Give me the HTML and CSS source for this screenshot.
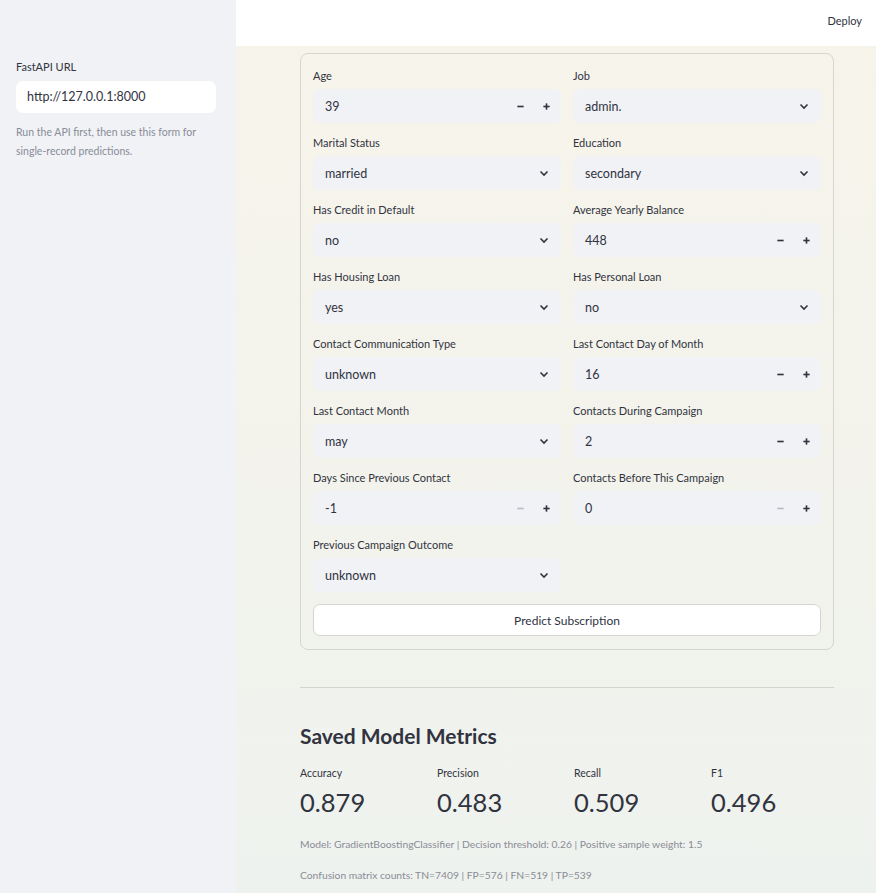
FILE: index.html
```html
<!DOCTYPE html>
<html lang="en">
<head>
  <meta charset="UTF-8">
  <meta name="viewport" content="width=device-width, initial-scale=1.0">
  <title>Bank Marketing Prediction</title>
  <link rel="stylesheet" href="styles.css">
</head>
<body>
  <aside class="sidebar">
    <label class="field-label">FastAPI URL</label>
    <div class="text-input">http://127.0.0.1:8000</div>
    <p class="sidebar-help">Run the API first, then use this form for single-record predictions.</p>
  </aside>

  <div class="main">
    <header class="topbar">
      <span class="deploy">Deploy</span>
    </header>

    <div class="content">
      <form class="form-card">
        <div class="form-grid">
          <div class="field">
            <label class="field-label">Age</label>
            <div class="box number">
              <span class="value">39</span>
              <span class="step"><svg viewBox="0 0 10 10"><line x1="1.5" y1="5" x2="8.5" y2="5"/></svg></span>
              <span class="step"><svg viewBox="0 0 10 10"><line x1="1.5" y1="5" x2="8.5" y2="5"/><line x1="5" y1="1.5" x2="5" y2="8.5"/></svg></span>
            </div>
          </div>
          <div class="field">
            <label class="field-label">Job</label>
            <div class="box select">
              <span class="value">admin.</span>
              <svg class="chevron" viewBox="0 0 12 12"><polyline points="2.5,4.5 6,8 9.5,4.5"/></svg>
            </div>
          </div>

          <div class="field">
            <label class="field-label">Marital Status</label>
            <div class="box select">
              <span class="value">married</span>
              <svg class="chevron" viewBox="0 0 12 12"><polyline points="2.5,4.5 6,8 9.5,4.5"/></svg>
            </div>
          </div>
          <div class="field">
            <label class="field-label">Education</label>
            <div class="box select">
              <span class="value">secondary</span>
              <svg class="chevron" viewBox="0 0 12 12"><polyline points="2.5,4.5 6,8 9.5,4.5"/></svg>
            </div>
          </div>

          <div class="field">
            <label class="field-label">Has Credit in Default</label>
            <div class="box select">
              <span class="value">no</span>
              <svg class="chevron" viewBox="0 0 12 12"><polyline points="2.5,4.5 6,8 9.5,4.5"/></svg>
            </div>
          </div>
          <div class="field">
            <label class="field-label">Average Yearly Balance</label>
            <div class="box number">
              <span class="value">448</span>
              <span class="step"><svg viewBox="0 0 10 10"><line x1="1.5" y1="5" x2="8.5" y2="5"/></svg></span>
              <span class="step"><svg viewBox="0 0 10 10"><line x1="1.5" y1="5" x2="8.5" y2="5"/><line x1="5" y1="1.5" x2="5" y2="8.5"/></svg></span>
            </div>
          </div>

          <div class="field">
            <label class="field-label">Has Housing Loan</label>
            <div class="box select">
              <span class="value">yes</span>
              <svg class="chevron" viewBox="0 0 12 12"><polyline points="2.5,4.5 6,8 9.5,4.5"/></svg>
            </div>
          </div>
          <div class="field">
            <label class="field-label">Has Personal Loan</label>
            <div class="box select">
              <span class="value">no</span>
              <svg class="chevron" viewBox="0 0 12 12"><polyline points="2.5,4.5 6,8 9.5,4.5"/></svg>
            </div>
          </div>

          <div class="field">
            <label class="field-label">Contact Communication Type</label>
            <div class="box select">
              <span class="value">unknown</span>
              <svg class="chevron" viewBox="0 0 12 12"><polyline points="2.5,4.5 6,8 9.5,4.5"/></svg>
            </div>
          </div>
          <div class="field">
            <label class="field-label">Last Contact Day of Month</label>
            <div class="box number">
              <span class="value">16</span>
              <span class="step"><svg viewBox="0 0 10 10"><line x1="1.5" y1="5" x2="8.5" y2="5"/></svg></span>
              <span class="step"><svg viewBox="0 0 10 10"><line x1="1.5" y1="5" x2="8.5" y2="5"/><line x1="5" y1="1.5" x2="5" y2="8.5"/></svg></span>
            </div>
          </div>

          <div class="field">
            <label class="field-label">Last Contact Month</label>
            <div class="box select">
              <span class="value">may</span>
              <svg class="chevron" viewBox="0 0 12 12"><polyline points="2.5,4.5 6,8 9.5,4.5"/></svg>
            </div>
          </div>
          <div class="field">
            <label class="field-label">Contacts During Campaign</label>
            <div class="box number">
              <span class="value">2</span>
              <span class="step"><svg viewBox="0 0 10 10"><line x1="1.5" y1="5" x2="8.5" y2="5"/></svg></span>
              <span class="step"><svg viewBox="0 0 10 10"><line x1="1.5" y1="5" x2="8.5" y2="5"/><line x1="5" y1="1.5" x2="5" y2="8.5"/></svg></span>
            </div>
          </div>

          <div class="field">
            <label class="field-label">Days Since Previous Contact</label>
            <div class="box number">
              <span class="value">-1</span>
              <span class="step disabled"><svg viewBox="0 0 10 10"><line x1="1.5" y1="5" x2="8.5" y2="5"/></svg></span>
              <span class="step"><svg viewBox="0 0 10 10"><line x1="1.5" y1="5" x2="8.5" y2="5"/><line x1="5" y1="1.5" x2="5" y2="8.5"/></svg></span>
            </div>
          </div>
          <div class="field">
            <label class="field-label">Contacts Before This Campaign</label>
            <div class="box number">
              <span class="value">0</span>
              <span class="step disabled"><svg viewBox="0 0 10 10"><line x1="1.5" y1="5" x2="8.5" y2="5"/></svg></span>
              <span class="step"><svg viewBox="0 0 10 10"><line x1="1.5" y1="5" x2="8.5" y2="5"/><line x1="5" y1="1.5" x2="5" y2="8.5"/></svg></span>
            </div>
          </div>

          <div class="field">
            <label class="field-label">Previous Campaign Outcome</label>
            <div class="box select">
              <span class="value">unknown</span>
              <svg class="chevron" viewBox="0 0 12 12"><polyline points="2.5,4.5 6,8 9.5,4.5"/></svg>
            </div>
          </div>
        </div>

        <button type="button" class="submit">Predict Subscription</button>
      </form>

      <hr class="divider">

      <h3 class="section-title">Saved Model Metrics</h3>
      <div class="metrics">
        <div class="metric">
          <div class="metric-label">Accuracy</div>
          <div class="metric-value">0.879</div>
        </div>
        <div class="metric">
          <div class="metric-label">Precision</div>
          <div class="metric-value">0.483</div>
        </div>
        <div class="metric">
          <div class="metric-label">Recall</div>
          <div class="metric-value">0.509</div>
        </div>
        <div class="metric">
          <div class="metric-label">F1</div>
          <div class="metric-value">0.496</div>
        </div>
      </div>

      <p class="caption">Model: GradientBoostingClassifier | Decision threshold: 0.26 | Positive sample weight: 1.5</p>
      <p class="caption">Confusion matrix counts: TN=7409 | FP=576 | FN=519 | TP=539</p>
    </div>
  </div>
</body>
</html>
```

FILE: styles.css
```css
* {
  box-sizing: border-box;
}

body {
  margin: 0;
  font-family: Lato, "Noto Sans", sans-serif;
  color: #31333f;
  display: flex;
  min-height: 100vh;
  overflow: hidden;
}

/* sidebar */
.sidebar {
  width: 236px;
  flex-shrink: 0;
  background-color: #f0f2f6;
  padding: 59px 20px 0 16px;
}

.field-label {
  display: block;
  font-size: 11px;
  line-height: 16px;
  color: #31333f;
}

.text-input {
  margin-top: 6px;
  height: 32px;
  background-color: #fff;
  border-radius: 7px;
  padding: 0 11px;
  font-size: 12.5px;
  line-height: 32px;
}

.sidebar-help {
  margin: 10px 0 0;
  font-size: 10.5px;
  line-height: 19px;
  color: #8a8c96;
}

/* main column */
.main {
  flex: 1;
  display: flex;
  flex-direction: column;
  background: linear-gradient(180deg, #f7f4ea 0%, #f3f3ec 50%, #eef2ee 100%);
}

.topbar {
  height: 46px;
  background-color: #fff;
  display: flex;
  align-items: flex-start;
  justify-content: flex-end;
  padding: 13px 14px 0 0;
}

.deploy {
  font-size: 11px;
  line-height: 16px;
}

.content {
  width: 534px;
  margin-left: 64px;
  padding-top: 7px;
}

/* form */
.form-card {
  border: 1px solid #d6d6d0;
  border-radius: 8px;
  padding: 14px 12px 13px;
}

.form-grid {
  display: grid;
  grid-template-columns: 1fr 1fr;
  column-gap: 12px;
  row-gap: 12px;
}

.field .field-label {
  margin-bottom: 5px;
}

.box {
  height: 34px;
  background-color: #f0f2f6;
  border-radius: 7px;
  display: flex;
  align-items: center;
  padding-left: 12px;
  font-size: 12.5px;
}

.box .value {
  flex: 1;
}

.select {
  padding-right: 11px;
}

.chevron {
  width: 12px;
  height: 12px;
  fill: none;
  stroke: #31333f;
  stroke-width: 1.6;
}

.number {
  padding-right: 2px;
}

.step {
  width: 26px;
  height: 34px;
  display: flex;
  align-items: center;
  justify-content: center;
}

.step svg {
  width: 9px;
  height: 9px;
  stroke: #31333f;
  stroke-width: 1.8;
}

.step.disabled svg {
  stroke: #b8bac2;
}

.submit {
  display: block;
  width: 100%;
  height: 32px;
  margin-top: 12px;
  background-color: #fff;
  border: 1px solid #d6d6d0;
  border-radius: 7px;
  font-family: inherit;
  font-size: 12px;
  color: #31333f;
}

.divider {
  margin: 37px 0 0;
  border: none;
  border-top: 1px solid #d2d4d0;
}

/* metrics */
.section-title {
  margin: 34px 0 0;
  font-size: 21px;
  line-height: 28px;
  font-weight: 700;
}

.metrics {
  display: grid;
  grid-template-columns: repeat(4, 137px);
  margin-top: 15px;
}

.metric-label {
  font-size: 10.5px;
  line-height: 16px;
}

.metric-value {
  margin-top: 4px;
  font-size: 25.5px;
  line-height: 34px;
}

.caption {
  margin: 17px 0 0;
  font-size: 10.3px;
  line-height: 16px;
  color: #8a8c96;
}

.caption + .caption {
  margin-top: 15px;
}
```
